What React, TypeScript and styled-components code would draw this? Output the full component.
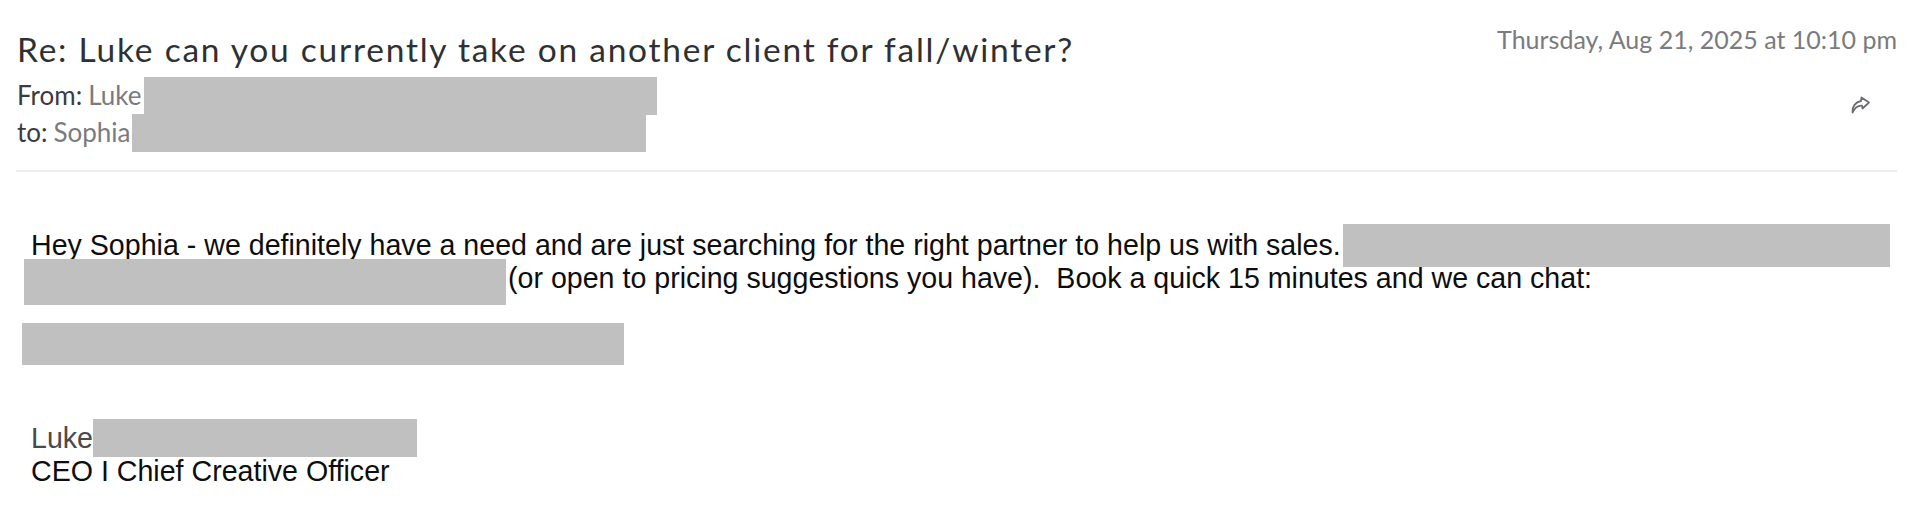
import React from 'react';
import styled, { createGlobalStyle } from 'styled-components';

const Global = createGlobalStyle`
  html, body { margin: 0; padding: 0; background: #ffffff; }
  body { width: 1920px; height: 512px; overflow: hidden; }
`;

const Page = styled.div`
  padding: 0 23px 0 16px;
`;

const Header = styled.header`
  display: flex;
  justify-content: space-between;
  align-items: flex-start;
  height: 172px;
  box-sizing: border-box;
  border-bottom: 2px solid #eceef2;
  font-family: Lato, 'Noto Sans', sans-serif;
`;

const Meta = styled.div`
  display: flex;
  flex-direction: column;
  padding: 30px 0 0 1px;
`;

const Title = styled.h1`
  margin: 0 0 9px;
  font-size: 33.5px;
  line-height: 38px;
  letter-spacing: 1.76px;
  font-weight: 400;
  color: #2f3033;
`;

const Party = styled.div`
  font-size: 26px;
  line-height: 37px;
  color: #3a3b3e;
  display: flex;
  align-items: center;
`;

const Name = styled.span`
  color: #7a7b7e;
  margin-left: 6px;
`;

const Side = styled.div`
  display: flex;
  flex-direction: column;
  align-items: flex-end;
  padding-top: 24px;
`;

const DateText = styled.div`
  font-size: 25px;
  line-height: 30px;
  color: #7a7b7e;
`;

const IconButton = styled.button`
  margin: 41px 25px 0 0;
  padding: 0;
  border: 0;
  background: none;
  width: 24px;
  height: 20px;
  display: flex;
  align-items: center;
  justify-content: center;
  color: #6c6d70;
`;

const Body = styled.div`
  padding: 57px 0 0 15px;
  font-family: 'Liberation Sans', Arial, sans-serif;
  font-size: 28.6px;
  line-height: 33px;
  color: #0d0d0d;
`;

const Para = styled.p`
  margin: 0;
`;

const Redact = styled.span<{ $w: number; $h: number; $ml?: number; $mr?: number; $dy?: number }>`
  display: inline-block;
  width: ${(p) => p.$w}px;
  height: ${(p) => p.$h}px;
  background: #c0c0c0;
  vertical-align: middle;
  margin: ${(p) => -p.$h / 2 + 8}px ${(p) => p.$mr ?? 0}px ${(p) => -p.$h / 2 + 8}px ${(p) => p.$ml ?? 0}px;
  transform: translateY(${(p) => p.$dy ?? 0}px);
`;

const RedactBlock = styled.div<{ $w: number; $h: number }>`
  width: ${(p) => p.$w}px;
  height: ${(p) => p.$h}px;
  background: #c0c0c0;
  margin: 28px 0 0 -9px;
`;

const Signature = styled.div`
  margin-top: 57px;
`;

const SigName = styled.div`
  color: #4a4a4a;
`;

const ForwardIcon = () => (
  <svg width="24" height="20" viewBox="0 0 24 20" fill="none" stroke="currentColor" strokeWidth="1.8" strokeLinejoin="round" strokeLinecap="round">
    <path d="M13.5 2.5 L21 7.5 L14.5 13.5 L14 10.6 C10 10.2 7 12.4 4.5 17.5 C4 11.5 7.5 7 13 6 Z" />
  </svg>
);

export default function App() {
  return (
    <>
      <Global />
      <Page>
        <Header>
          <Meta>
            <Title>Re: Luke can you currently take on another client for fall/winter?</Title>
            <Party>
              From:<Name>Luke</Name>
              <Redact $w={513} $h={38} $ml={3} />
            </Party>
            <Party>
              to:<Name>Sophia</Name>
              <Redact $w={514} $h={38} $ml={1} />
            </Party>
          </Meta>
          <Side>
            <DateText>Thursday, Aug 21, 2025 at 10:10 pm</DateText>
            <IconButton aria-label="Forward">
              <ForwardIcon />
            </IconButton>
          </Side>
        </Header>
        <Body>
          <Para>
            Hey Sophia - we definitely have a need and are just searching for the right partner to help us with sales.
            <Redact $w={547} $h={43} $ml={2} $dy={-2} />
            <br />
            <Redact $w={482} $h={46} $ml={-7} $mr={2} $dy={2} />
            (or open to pricing suggestions you have).&nbsp; Book a quick 15 minutes and we can chat:
          </Para>
          <RedactBlock $w={602} $h={42} />
          <Signature>
            <SigName>
              Luke
              <Redact $w={324} $h={38} $dy={-2} />
            </SigName>
            <div>CEO I Chief Creative Officer</div>
          </Signature>
        </Body>
      </Page>
    </>
  );
}
